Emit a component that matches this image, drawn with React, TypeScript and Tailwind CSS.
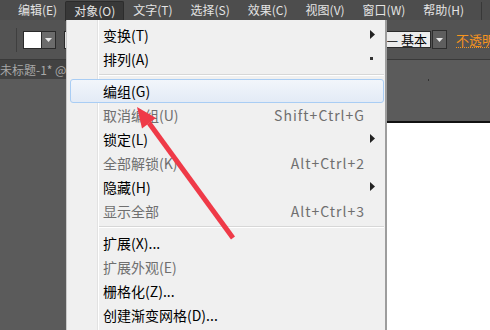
import React from "react";

const FONT = { fontFamily: '"Noto Sans CJK SC", "Liberation Sans", sans-serif' };

type Item =
  | { sep: true }
  | { sep?: false; label: string; disabled?: boolean; shortcut?: string; arrow?: boolean; partialArrow?: boolean; active?: boolean };

const items: Item[] = [
  { label: "变换(T)", arrow: true },
  { label: "排列(A)", partialArrow: true },
  { sep: true },
  { label: "编组(G)", active: true },
  { label: "取消编组(U)", disabled: true, shortcut: "Shift+Ctrl+G" },
  { label: "锁定(L)", arrow: true },
  { label: "全部解锁(K)", disabled: true, shortcut: "Alt+Ctrl+2" },
  { label: "隐藏(H)", arrow: true },
  { label: "显示全部", disabled: true, shortcut: "Alt+Ctrl+3" },
  { sep: true },
  { label: "扩展(X)..." },
  { label: "扩展外观(E)", disabled: true },
  { label: "栅格化(Z)..." },
  { label: "创建渐变网格(D)..." },
];

const menuBar = ["编辑(E)", "对象(O)", "文字(T)", "选择(S)", "效果(C)", "视图(V)", "窗口(W)", "帮助(H)"];

function Arrow() {
  return (
    <svg width="5" height="9" viewBox="0 0 5 9" className="block">
      <path d="M0 0 L5 4.5 L0 9 Z" fill="#222" />
    </svg>
  );
}

function DownTri() {
  return (
    <svg width="7" height="4" viewBox="0 0 7 4" className="block">
      <path d="M0 0 H7 L3.5 4 Z" fill="#e8e8e8" />
    </svg>
  );
}

export default function App() {
  return (
    <div className="relative w-[490px] h-[330px] overflow-hidden bg-[#5b5b5b] flex flex-col" style={FONT}>
      {/* menu bar */}
      <div className="h-[20px] bg-[#4d4d4d] flex items-center pl-[9px] text-[12px] text-[#e4e4e4] shrink-0 relative">
        {menuBar.map((m, i) => (
          <div
            key={m}
            className={
              i === 1
                ? "h-[20px] mt-[1px] px-[8px] flex items-center bg-[#383838] border border-[#2c2c2c] border-b-0 rounded-t-[2px] ml-[-1px]"
                : "h-[20px] px-[9px] flex items-center"
            }
          >
            {m}
          </div>
        ))}
        <div className="absolute left-[481px] top-[2px] w-px h-[18px] bg-[#383838]" />
      </div>

      {/* toolbar */}
      <div className="h-[40px] bg-[#535353] border-b border-[#3a3a3a] flex items-center shrink-0">
        <div className="ml-[16px] w-px h-[24px] bg-[#3f3f3f] shrink-0" />
        <div className="ml-[6px] w-[19px] h-[18px] bg-white border border-[#2a2a2a] shrink-0" />
        <div className="w-[14px] h-[18px] bg-[#6b6b6b] border border-[#2a2a2a] border-l-0 flex items-center justify-center shrink-0">
          <DownTri />
        </div>
        <div className="ml-[8px] w-[4px] h-[18px] bg-[#e0e0e0] border border-[#2a2a2a] shrink-0" />
        <div className="ml-[318px] w-[45px] h-[17px] bg-[#ececec] border border-[#2a2a2a] border-l-0 flex items-center justify-end pr-[3px] text-[13px] text-black leading-none whitespace-nowrap overflow-hidden shrink-0">
          —&nbsp;基本
        </div>
        <div className="ml-[1px] w-[15px] h-[19px] bg-[#5e5e5e] border border-[#2e2e2e] flex items-center justify-center shrink-0">
          <DownTri />
        </div>
        <div className="ml-[9px] text-[13px] text-[#f7941e] border-b border-dotted border-[#f7941e] leading-[15px] whitespace-nowrap shrink-0">
          不透明
        </div>
      </div>

      {/* tab row */}
      <div className="h-[19px] flex shrink-0">
        <div className="w-[80px] h-full bg-[#424242] text-[12px] text-[#a8a8a8] flex items-center whitespace-nowrap">未标题-1* @</div>
      </div>

      {/* canvas */}
      <div className="flex-1 flex flex-col min-h-0">
        <div className="h-[42px] relative shrink-0">
          <div className="absolute left-[428px] top-0 w-px h-[2px] bg-[#333]" />
        </div>
        <div className="flex-1 flex min-h-0">
          <div className="w-[330px] shrink-0" />
          <div className="flex-1 bg-white border-t-2 border-[#111]" />
        </div>
      </div>

      {/* dropdown menu */}
      <div className="absolute left-[66px] top-[20px] w-[321px] h-[312px] bg-[#f0f0f0] border-l border-[#c8c8c8] border-r-2 border-r-[#9d9d9d] pt-[3px]">
        <div className="absolute left-[30px] top-0 bottom-0 w-px bg-[#e2e2e2]" />
        <div className="absolute left-[31px] top-0 bottom-0 w-px bg-white" />
        {items.map((it, i) =>
          it.sep ? (
            <div key={i} className="h-[8px] flex items-center pl-[31px] pr-[1px]">
              <div className="w-full">
                <div className="h-px bg-[#d7d7d7]" />
                <div className="h-px bg-white" />
              </div>
            </div>
          ) : (
            <div key={i} className="relative h-[24px] flex items-center">
              {it.active && (
                <div className="absolute left-[3px] right-[1px] top-0 bottom-0 rounded-[3px] border border-[#a9cdf4] bg-gradient-to-b from-[#f2f6fb] to-[#e3ebf6]" />
              )}
              <div
                className={
                  "relative ml-[36px] text-[14px] leading-none whitespace-nowrap " +
                  (it.disabled ? "text-[#6f6f6f]" : "text-black")
                }
              >
                {it.label}
              </div>
              {it.shortcut && (
                <div className="relative ml-auto mr-[20px] text-[14px] leading-none text-[#6f6f6f] tracking-[1px] whitespace-nowrap">
                  {it.shortcut}
                </div>
              )}
              {it.arrow && (
                <div className="absolute right-[10px] top-[7px]">
                  <Arrow />
                </div>
              )}
              {it.partialArrow && <div className="absolute right-[12px] top-[10px] w-[3px] h-[3px] bg-[#333]" />}
            </div>
          )
        )}
      </div>

      {/* red annotation arrow */}
      <svg className="absolute left-0 top-0 pointer-events-none" width="490" height="330" viewBox="0 0 490 330">
        <line x1="233" y1="238" x2="149" y2="123" stroke="#ef3a48" strokeWidth="5" strokeLinecap="butt" />
        <path d="M137 107 L156 118 L142 128.5 Z" fill="#ef3a48" />
      </svg>
    </div>
  );
}
